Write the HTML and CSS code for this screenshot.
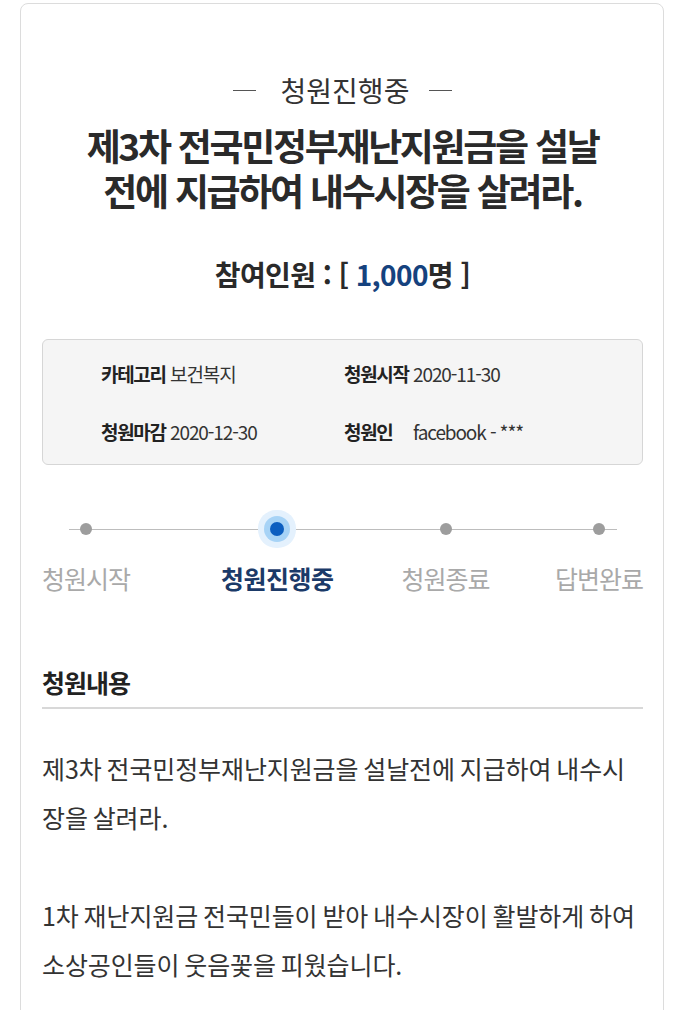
FILE: index.html
```html
<!DOCTYPE html>
<html lang="ko">
<head>
<meta charset="utf-8">
<title>청원진행중</title>
<link rel="stylesheet" href="styles.css">
</head>
<body>
<div class="card">
  <div class="status"><span class="status-text">청원진행중</span></div>
  <h1 class="title">제3차 전국민정부재난지원금을 설날<br>전에 지급하여 내수시장을 살려라.</h1>
  <div class="count">참여인원 : [ <span class="num">1,000</span>명 ]</div>

  <div class="info">
    <div class="info-item"><span class="label">카테고리</span><span class="value">보건복지</span></div>
    <div class="info-item"><span class="label">청원시작</span><span class="value">2020-11-30</span></div>
    <div class="info-item"><span class="label">청원마감</span><span class="value">2020-12-30</span></div>
    <div class="info-item"><span class="label">청원인</span><span class="value">facebook - ***</span></div>
  </div>

  <div class="steps">
    <div class="step step-1"><span class="dot"></span><span class="step-label">청원시작</span></div>
    <div class="step step-2 active"><span class="dot"></span><span class="step-label">청원진행중</span></div>
    <div class="step step-3"><span class="dot"></span><span class="step-label">청원종료</span></div>
    <div class="step step-4"><span class="dot"></span><span class="step-label">답변완료</span></div>
  </div>

  <h2 class="section-title">청원내용</h2>
  <div class="content">
    <p>제3차 전국민정부재난지원금을 설날전에 지급하여 내수시장을 살려라.</p>
    <p>1차 재난지원금 전국민들이 받아 내수시장이 활발하게 하여 소상공인들이 웃음꽃을 피웠습니다.</p>
  </div>
</div>
</body>
</html>
```

FILE: styles.css
```css
* { box-sizing: border-box; }
html, body { margin: 0; padding: 0; background: #fff; }
body {
  font-family: "Noto Sans CJK KR", "Noto Sans", sans-serif;
  color: #333;
}
.card {
  margin: 3px 16px 0 20px;
  border: 1px solid #dcdcdc;
  border-radius: 8px;
  padding: 68px 20px 40px 21px;
  min-height: 1100px;
}
.status {
  text-align: center;
  font-size: 28px;
  line-height: 36px;
  letter-spacing: 0;
  color: #333;
  display: flex;
  justify-content: center;
  align-items: center;
}
.status::before, .status::after {
  content: "";
  display: block;
  width: 23px;
  height: 1px;
  background: #555;
}
.status::before { margin-right: 25px; }
.status::after { margin-left: 20px; }
.title {
  margin: 15px 0 0;
  text-align: center;
  font-size: 37px;
  line-height: 45px;
  font-weight: 700;
  letter-spacing: -2.3px;
  color: #2a2a2a;
}
.count {
  margin-top: 43px;
  text-align: center;
  font-size: 28px;
  line-height: 36px;
  font-weight: 700;
  letter-spacing: -0.6px;
  color: #2a2a2a;
}
.count .num { color: #15427e; }
.info {
  margin-top: 47px;
  background: #f5f5f5;
  border: 1px solid #d6d6d6;
  border-radius: 6px;
  padding: 21px 10px 19px 58px;
  display: grid;
  grid-template-columns: 243px 1fr;
  row-gap: 32px;
  font-size: 19px;
  line-height: 26px;
  letter-spacing: -1.1px;
}
.info-item { display: flex; }
.label {
  font-weight: 700;
  color: #222;
  min-width: 65px;
  margin-right: 4px;
  letter-spacing: -1.3px;
}
.value { color: #333; }
.steps {
  margin-top: 39px;
  display: flex;
  position: relative;
}
.steps::before {
  content: "";
  position: absolute;
  left: 27px;
  right: 26px;
  top: 25px;
  height: 1px;
  background: #bdbdbd;
}
.step {
  display: flex;
  flex-direction: column;
  align-items: center;
  position: relative;
}
.step-2 { margin-left: 91px; }
.step-3 { margin-left: 68px; }
.step-4 { margin-left: auto; }
.dot {
  width: 12px;
  height: 12px;
  margin: 19px 0;
  border-radius: 50%;
  background: #9d9d9d;
}
.active .dot {
  width: 14px;
  height: 14px;
  margin: 18px 0;
  background: #0b5ec0;
  box-shadow: 0 0 0 6px #a7d3f6, 0 0 0 12px #e4f1fd;
}
.step-label {
  margin-top: 8px;
  font-size: 25px;
  line-height: 32px;
  letter-spacing: -1px;
  color: #a9a9a9;
  white-space: nowrap;
}
.active .step-label {
  font-weight: 700;
  letter-spacing: -0.5px;
  color: #1b3a68;
}
.section-title {
  margin: 72px 0 0;
  padding-bottom: 9px;
  border-bottom: 2px solid #d8d8d8;
  font-size: 25px;
  line-height: 32px;
  font-weight: 700;
  letter-spacing: -1px;
  color: #222;
}
.content {
  margin-top: 35px;
  font-size: 25px;
  line-height: 49px;
  letter-spacing: -0.1px;
  word-spacing: -2px;
  color: #333;
}
.content p { margin: 0; }
.content p + p { margin-top: 49px; }
```
